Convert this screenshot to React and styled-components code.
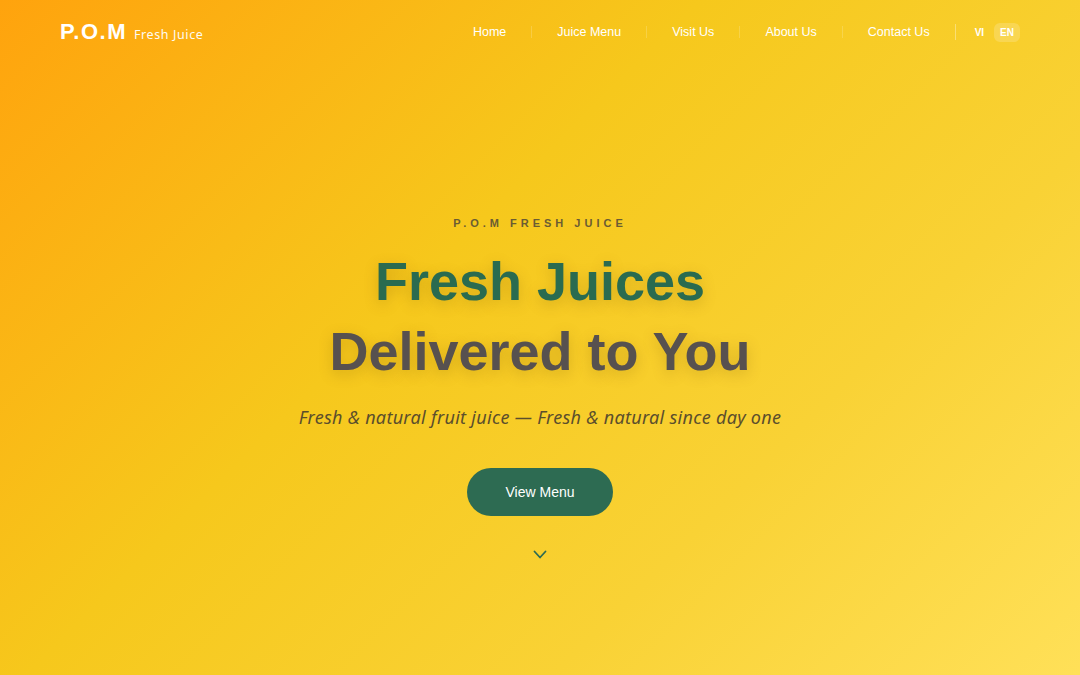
import React from "react";
import styled, { createGlobalStyle } from "styled-components";

const GlobalStyle = createGlobalStyle`
  html, body {
    margin: 0;
    padding: 0;
  }
  body {
    font-family: "Liberation Sans", Arial, sans-serif;
  }
  * {
    box-sizing: border-box;
  }
`;

const links = ["Home", "Juice Menu", "Visit Us", "About Us", "Contact Us"];

const App = () => {
  return (
    <Page>
      <GlobalStyle />
      <Header>
        <Logo>
          <span className="mark">P.O.M</span>
          <span className="sub">Fresh Juice</span>
        </Logo>
        <Nav>
          {links.map((l, i) => (
            <React.Fragment key={l}>
              <NavLink>{l}</NavLink>
              <Divider strong={i === links.length - 1} />
            </React.Fragment>
          ))}
          <Lang>
            <LangButton>VI</LangButton>
            <LangButton active>EN</LangButton>
          </Lang>
        </Nav>
      </Header>

      <Hero>
        <Eyebrow>P.O.M FRESH JUICE</Eyebrow>
        <Title>
          <span className="green">Fresh Juices</span>
          <span className="grey">Delivered to You</span>
        </Title>
        <Tagline>Fresh &amp; natural fruit juice — Fresh &amp; natural since day one</Tagline>
        <MenuButton>View Menu</MenuButton>
        <Chevron viewBox="0 0 14 9" width="14" height="9">
          <path
            d="M1.5 1.5 L7 7.5 L12.5 1.5"
            fill="none"
            stroke="#2d6b52"
            strokeWidth="1.8"
            strokeLinecap="round"
            strokeLinejoin="round"
          />
        </Chevron>
      </Hero>
    </Page>
  );
};

const Page = styled.div`
  width: 100%;
  height: 675px;
  overflow: hidden;
  background: linear-gradient(
    135deg,
    #ffa30d 0%,
    #f6c81c 40%,
    #f9d235 70%,
    #ffe058 100%
  );
  display: flex;
  flex-direction: column;
`;

const Header = styled.header`
  height: 64px;
  padding: 0 60px;
  display: flex;
  align-items: center;
  justify-content: space-between;
`;

const Logo = styled.div`
  display: flex;
  align-items: baseline;
  gap: 7px;
  color: #fff;

  .mark {
    font-family: "Liberation Sans", Arial, sans-serif;
    font-weight: 700;
    font-size: 22px;
    letter-spacing: 1.5px;
  }
  .sub {
    font-family: "Noto Sans", "Open Sans", sans-serif;
    font-size: 12.5px;
    letter-spacing: 0.6px;
    opacity: 0.95;
  }
`;

const Nav = styled.nav`
  display: flex;
  align-items: center;
`;

const NavLink = styled.a`
  font-size: 12.5px;
  color: #fff;
  padding: 0 25px;
  cursor: pointer;
`;

const Divider = styled.span`
  width: 1px;
  height: ${(p) => (p.strong ? "16px" : "12px")};
  background: rgba(255, 255, 255, ${(p) => (p.strong ? 0.35 : 0.18)});
`;

const Lang = styled.div`
  display: flex;
  align-items: center;
  gap: 4px;
  margin-left: 13px;
`;

const LangButton = styled.button`
  border: none;
  font-family: "Liberation Sans", Arial, sans-serif;
  font-weight: 700;
  font-size: 10px;
  color: #fff;
  padding: 4px 6px;
  border-radius: 6px;
  background: ${(p) => (p.active ? "rgba(255, 255, 255, 0.18)" : "transparent")};
`;

const Hero = styled.section`
  flex: 1;
  display: flex;
  flex-direction: column;
  align-items: center;
  padding-top: 153px;
  text-align: center;
`;

const Eyebrow = styled.div`
  font-size: 11px;
  font-weight: 700;
  letter-spacing: 4px;
  color: #6b5c33;
  margin-bottom: 17px;
`;

const Title = styled.h1`
  margin: 0;
  font-family: "Liberation Sans", Arial, sans-serif;
  font-weight: 700;
  font-size: 54px;
  line-height: 70px;
  display: flex;
  flex-direction: column;
  text-shadow: 0 4px 14px rgba(120, 80, 0, 0.25);

  .green {
    color: #2a6b50;
  }
  .grey {
    color: #57514f;
  }
`;

const Tagline = styled.p`
  margin: 19px 0 0;
  font-family: "Noto Sans", "Open Sans", sans-serif;
  font-style: italic;
  font-size: 18px;
  letter-spacing: 0.3px;
  color: #5b4e2c;
`;

const MenuButton = styled.button`
  margin-top: 39px;
  width: 146px;
  height: 48px;
  border: none;
  border-radius: 24px;
  background: #2d6b52;
  color: #fff;
  font-family: "Liberation Sans", Arial, sans-serif;
  font-size: 14px;
  cursor: pointer;
`;

const Chevron = styled.svg`
  margin-top: 34px;
`;

export default App;
